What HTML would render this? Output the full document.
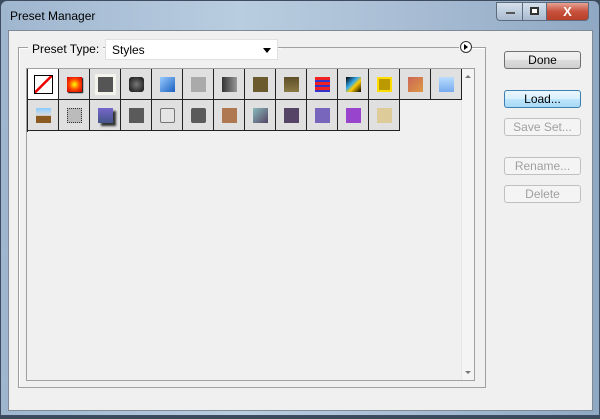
<!DOCTYPE html>
<html><head><style>
*{margin:0;padding:0;box-sizing:border-box}
body{width:600px;height:419px;overflow:hidden;background:#3b4a5c;font-family:"Liberation Sans",sans-serif;font-size:12px;position:relative}
.win{position:absolute;left:0;top:0;width:600px;height:416px;border-radius:7px 7px 0 0;background:linear-gradient(90deg,#9fb6cf,#b9cde0 40%,#a7bcd3 70%,#8fa8c3);border:1px solid #3d4c5e}
.client{position:absolute;left:8px;top:30px;width:585px;height:381px;background:#f0f0f0;border:1px solid #7f8a96}
.title{position:absolute;left:9px;top:8px;font-size:12px;color:#000}
.wb{position:absolute;top:1px;height:19px;border:1px solid #5c6b7e;background:linear-gradient(#d5e0ec,#a9bbd0)}
.btn{position:absolute;left:504px;width:77px;height:18px;border:1px solid #707070;border-radius:3px;background:linear-gradient(#f2f2f2,#ebebeb 50%,#dddddd 51%,#cfcfcf);text-align:center;line-height:16px;font-size:12px}
.dis{color:#a0a0a0;border-color:#c0c0c0;background:#f4f4f4}
.cell{position:absolute;width:31px;height:31px;border-right:1px solid #222;border-bottom:1px solid #222;background:#e0e0e0}
.cell i{position:absolute;left:8px;top:8px;width:15px;height:15px;display:block}
</style></head><body>
<div class="win">
<div class="title">Preset Manager</div>
<div class="wb" style="left:495px;width:27px;border-radius:0 0 0 4px"><div style="position:absolute;left:9px;top:9px;width:9px;height:2px;background:#fff;border:1px solid #555"></div></div>
<div class="wb" style="left:521px;width:25px"><div style="position:absolute;left:7px;top:4px;width:9px;height:8px;border:2px solid #333;background:#fff"></div></div>
<div class="wb" style="left:545px;width:43px;border-radius:0 0 4px 0;background:linear-gradient(#e8a293,#c7513c 50%,#b8402a);color:#fff;font-weight:bold;text-align:center;line-height:17px;font-size:13px">X</div>
</div>
<div class="client"></div>
<div style="position:absolute;left:18px;top:47px;width:468px;height:341px;border:1px solid #a0a0a0;box-shadow:1px 1px 0 #fff inset"></div>
<div style="position:absolute;left:28px;top:40px;background:#f0f0f0;padding:0 4px;line-height:18px">Preset Type:</div>
<div style="position:absolute;left:105px;top:39px;width:173px;height:21px;background:#fff;border:1px solid #e0e0e0;padding:3px 6px">Styles<span style="position:absolute;right:6px;top:8px;border:4px solid transparent;border-top:5px solid #000;border-bottom:0"></span></div>
<div style="position:absolute;left:281px;top:47px;width:180px;height:10px;background:#f0f0f0"></div>
<div style="position:absolute;left:281px;top:47px;width:178px;border-top:1px solid #a0a0a0"></div>
<div style="position:absolute;left:460px;top:41px;width:12px;height:12px;border-radius:50%;border:1px solid #333;background:#fff"><span style="position:absolute;left:3px;top:2px;border:3px solid transparent;border-left:4px solid #000;border-right:0"></span></div>
<div style="position:absolute;left:26px;top:68px;width:449px;height:313px;border:1px solid #a0a0a0;background:#f0f0f0"></div>
<div style="position:absolute;left:461px;top:69px;width:13px;height:311px;background:#f4f4f4;border-left:1px solid #e6e6e6"><span style="position:absolute;left:3px;top:6px;border:3px solid transparent;border-bottom:3px solid #777;border-top:0"></span><span style="position:absolute;left:3px;bottom:6px;border:3px solid transparent;border-top:3px solid #777;border-bottom:0"></span></div>
<div style="position:absolute;left:27px;top:69px;width:1px;height:63px;background:#222"></div>
<div id="g"></div>
<div class="btn" style="top:51px">Done</div>
<div class="btn" style="top:90px;border-color:#3c7fb1;background:linear-gradient(#eaf6fd,#d9f0fc 50%,#bee6fd 51%,#a7d9f5)">Load...</div>
<div class="btn dis" style="top:118px">Save Set...</div>
<div class="btn dis" style="top:157px">Rename...</div>
<div class="btn dis" style="top:185px">Delete</div>
<div style="position:absolute;left:28px;top:69px">
<div class="cell" style="left:0;top:0;background:#fff"><i style="border:1px solid #000;background:linear-gradient(45deg,transparent 46%,#e00 46%,#e00 56%,transparent 56%);transform:scaleX(-1);width:19px;height:19px;left:6px;top:6px"></i></div>
<div class="cell" style="left:31px;top:0"><i style="background:radial-gradient(#ff0,#f40 50%,#c00);box-shadow:1px 1px 1px #000"></i></div>
<div class="cell" style="left:62px;top:0"><i style="background:#555;box-shadow:0 0 0 3px #f4f4ec"></i></div>
<div class="cell" style="left:93px;top:0"><i style="background:radial-gradient(#777,#111);border-radius:3px"></i></div>
<div class="cell" style="left:124px;top:0"><i style="background:linear-gradient(135deg,#9cf,#1a5fc0)"></i></div>
<div class="cell" style="left:155px;top:0"><i style="background:#aaa"></i></div>
<div class="cell" style="left:186px;top:0"><i style="background:linear-gradient(90deg,#333,#999)"></i></div>
<div class="cell" style="left:217px;top:0"><i style="background:#6b5a2e"></i></div>
<div class="cell" style="left:248px;top:0"><i style="background:linear-gradient(#5e4f28,#8a7a45)"></i></div>
<div class="cell" style="left:279px;top:0"><i style="background:repeating-linear-gradient(#e22 0 3px,#33c 3px 5px)"></i></div>
<div class="cell" style="left:310px;top:0"><i style="background:linear-gradient(135deg,#000,#3ae 40%,#fc0 60%,#000)"></i></div>
<div class="cell" style="left:341px;top:0"><i style="background:#b90;border:2px solid #fd0"></i></div>
<div class="cell" style="left:372px;top:0"><i style="background:linear-gradient(135deg,#c65,#d94)"></i></div>
<div class="cell" style="left:403px;top:0"><i style="background:linear-gradient(#bdf,#7ae)"></i></div>
<div class="cell" style="left:0;top:31px"><i style="background:linear-gradient(#8cf,#ddd 50%,#8a5a20 55%)"></i></div>
<div class="cell" style="left:31px;top:31px"><i style="background:#bbb;border:1px dotted #333"></i></div>
<div class="cell" style="left:62px;top:31px"><i style="background:linear-gradient(#76c,#458);box-shadow:3px 3px 2px #333"></i></div>
<div class="cell" style="left:93px;top:31px"><i style="background:#5a5a5a"></i></div>
<div class="cell" style="left:124px;top:31px"><i style="background:#e4e4e4;border:1px solid #777;border-radius:2px"></i></div>
<div class="cell" style="left:155px;top:31px"><i style="background:#5a5a5a;border-radius:2px"></i></div>
<div class="cell" style="left:186px;top:31px"><i style="background:#b07850"></i></div>
<div class="cell" style="left:217px;top:31px"><i style="background:linear-gradient(135deg,#8bb,#546)"></i></div>
<div class="cell" style="left:248px;top:31px"><i style="background:#546"></i></div>
<div class="cell" style="left:279px;top:31px"><i style="background:#76b"></i></div>
<div class="cell" style="left:310px;top:31px"><i style="background:#94c"></i></div>
<div class="cell" style="left:341px;top:31px"><i style="background:#dc9"></i></div>
</div>
</body></html>
